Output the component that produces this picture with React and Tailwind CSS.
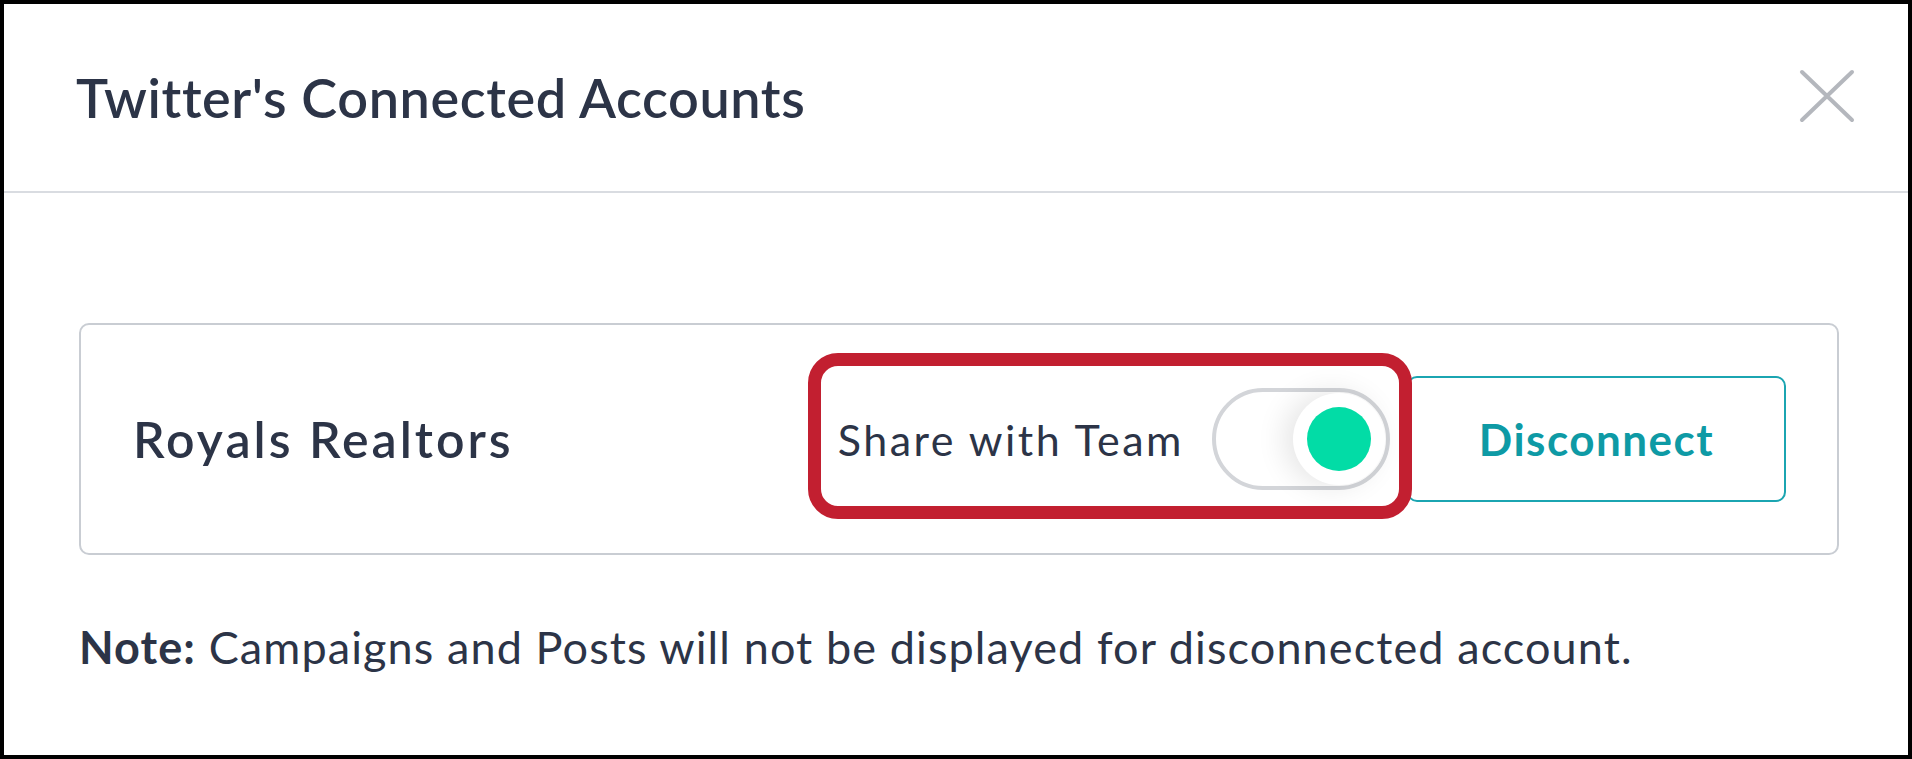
import React from "react";

export default function App() {
  return (
    <div className="w-[1912px] h-[759px] border-4 border-black bg-white flex flex-col font-['Lato',sans-serif] text-[#2c3447] overflow-hidden">
      <header className="h-[189px] shrink-0 flex items-center justify-between pl-[72px] pr-[53px] border-b-2 border-[#d9dce1]">
        <h1 className="text-[54px] leading-none font-semibold tracking-[0.6px]">Twitter's Connected Accounts</h1>
        <svg width="56" height="54" viewBox="0 0 56 54" className="mt-[-4px]">
          <path d="M3 3 L53 51 M53 3 L3 51" stroke="#b4b7bd" strokeWidth="4" strokeLinecap="round" fill="none" />
        </svg>
      </header>
      <div className="pt-[130px] pl-[75px] pr-[69px]">
        <div className="h-[232px] border-2 border-[#c9cdd3] rounded-[10px] flex items-center justify-between pl-[52px] pr-[51px]">
          <span className="text-[50px] leading-none font-semibold tracking-[3px]">Royals Realtors</span>
          <div className="relative flex items-center">
            <span className="text-[43px] leading-none font-normal tracking-[2.5px]">Share with Team</span>
            <div className="ml-[28px] w-[178px] h-[102px] rounded-full border-4 border-[#d3d5d9] bg-white flex items-center justify-end pr-[1px]">
              <div className="w-[92px] h-[92px] rounded-full bg-white shadow-[-8px_0_30px_rgba(0,0,0,0.11)] flex items-center justify-center">
                <div className="w-[64px] h-[64px] rounded-full bg-[#02dca6]" />
              </div>
            </div>
            <button className="ml-[17px] w-[379px] h-[126px] border-2 border-[#1ba5b1] rounded-[10px] text-[44px] font-bold tracking-[1.5px] text-[#0e9aa5] bg-white">
              Disconnect
            </button>
            <div className="absolute left-[-30px] top-[-23px] w-[604px] h-[166px] border-[13px] border-[#c21f30] rounded-[30px] pointer-events-none" />
          </div>
        </div>
        <p className="mt-[70px] text-[45px] leading-none tracking-[1.1px]">
          <span className="font-bold">Note:</span> Campaigns and Posts will not be displayed for disconnected account.
        </p>
      </div>
    </div>
  );
}
